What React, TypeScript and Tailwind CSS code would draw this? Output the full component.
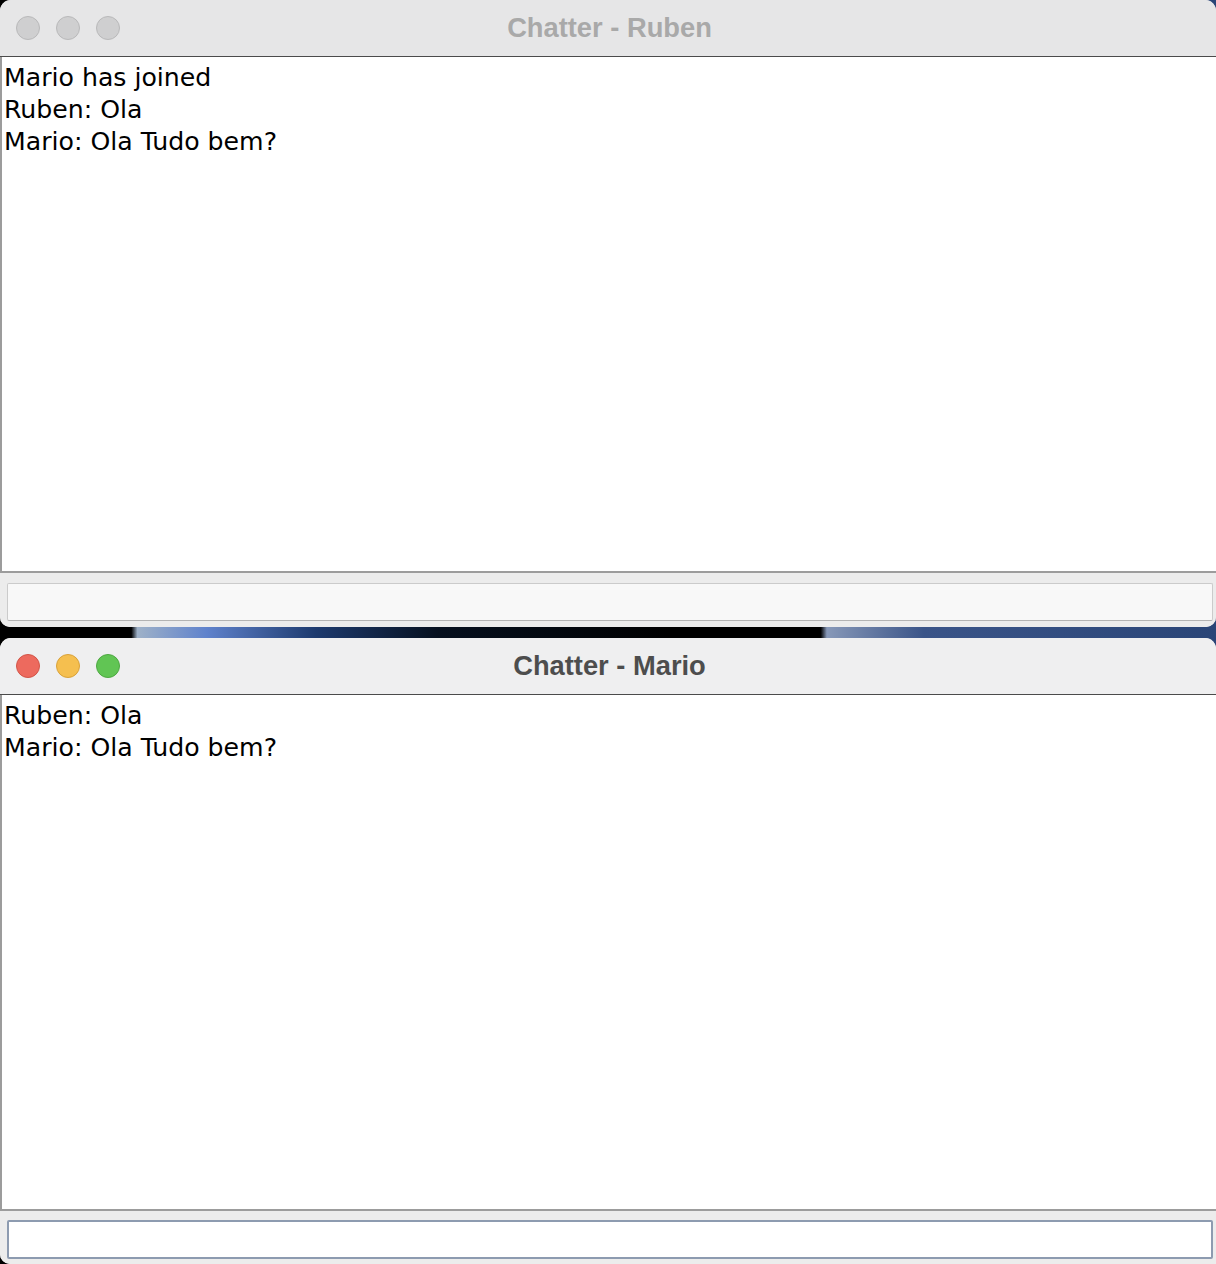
import React from "react";

type WindowProps = {
  title: string;
  lines: string[];
  active: boolean;
  last?: boolean;
};

function Lights({ active }: { active: boolean }) {
  const dots = active
    ? [
        "bg-[#ed6a5e] border-[#d25548]",
        "bg-[#f5bf4f] border-[#d9a23a]",
        "bg-[#61c554] border-[#4ea842]",
      ]
    : [
        "bg-[#cfcfd0] border-[#b9b9ba]",
        "bg-[#cfcfd0] border-[#b9b9ba]",
        "bg-[#cfcfd0] border-[#b9b9ba]",
      ];
  return (
    <div className="absolute left-[16px] top-1/2 flex -translate-y-1/2 gap-[16px]">
      {dots.map((c, i) => (
        <span key={i} className={`block h-[24px] w-[24px] rounded-full border ${c}`} />
      ))}
    </div>
  );
}

function ChatWindow({ title, lines, active, last }: WindowProps) {
  return (
    <div
      className={`flex flex-col overflow-hidden rounded-t-[11px] ${
        last ? "rounded-bl-[10px]" : "rounded-b-[10px]"
      } ${active ? "bg-[#efeff0]" : "bg-[#e6e6e7]"}`}
    >
      <div
        className={`relative flex h-[57px] shrink-0 items-center justify-center border-b border-[#4b4b4b] ${
          active ? "bg-[#efeff0]" : "bg-[#e6e6e7]"
        }`}
      >
        <Lights active={active} />
        <span
          className={`pl-[3px] text-[27.3px] font-bold ${active ? "text-[#4d4d4d]" : "text-[#a9a9a9]"}`}
          style={{ fontFamily: '"Liberation Sans", Arial, sans-serif' }}
        >
          {title}
        </span>
      </div>

      <div
        className="h-[516px] shrink-0 border-b-2 border-l-2 border-[#9c9c9c] bg-white pl-[2px] pt-[5px] text-[25.2px] leading-[32px] text-black"
        style={{ fontFamily: '"DejaVu Sans", "Noto Sans", sans-serif' }}
      >
        {lines.map((l) => (
          <div key={l}>{l}</div>
        ))}
      </div>

      <div className={`shrink-0 pl-[7px] pr-[3px] ${last ? "h-[53px] bg-[#ececec] pt-[9px]" : "h-[54px] bg-[#ececec] pt-[10px]"}`}>
        {active ? (
          <div className="h-[39px] rounded-[2px] border-2 border-[#8d9bb0] bg-white" />
        ) : (
          <div className="h-[38px] rounded-[2px] border border-[#cbcbcb] border-b-[#b3b3b3] bg-[#f8f8f8]" />
        )}
      </div>
    </div>
  );
}

export default function App() {
  return (
    <div className="flex h-[1264px] w-[1216px] flex-col gap-[11px] overflow-hidden bg-[linear-gradient(90deg,#000_0%,#000_10.8%,#9eb1c8_11.3%,#5f82cc_17%,#1d3a6e_26%,#06101f_36%,#000_55%,#000_67.5%,#8798b8_68%,#3a5488_76%,#2a4577_100%)]">
      <ChatWindow title="Chatter - Ruben" lines={["Mario has joined", "Ruben: Ola", "Mario: Ola Tudo bem?"]} active={false} />
      <ChatWindow title="Chatter - Mario" lines={["Ruben: Ola", "Mario: Ola Tudo bem?"]} active last />
    </div>
  );
}
